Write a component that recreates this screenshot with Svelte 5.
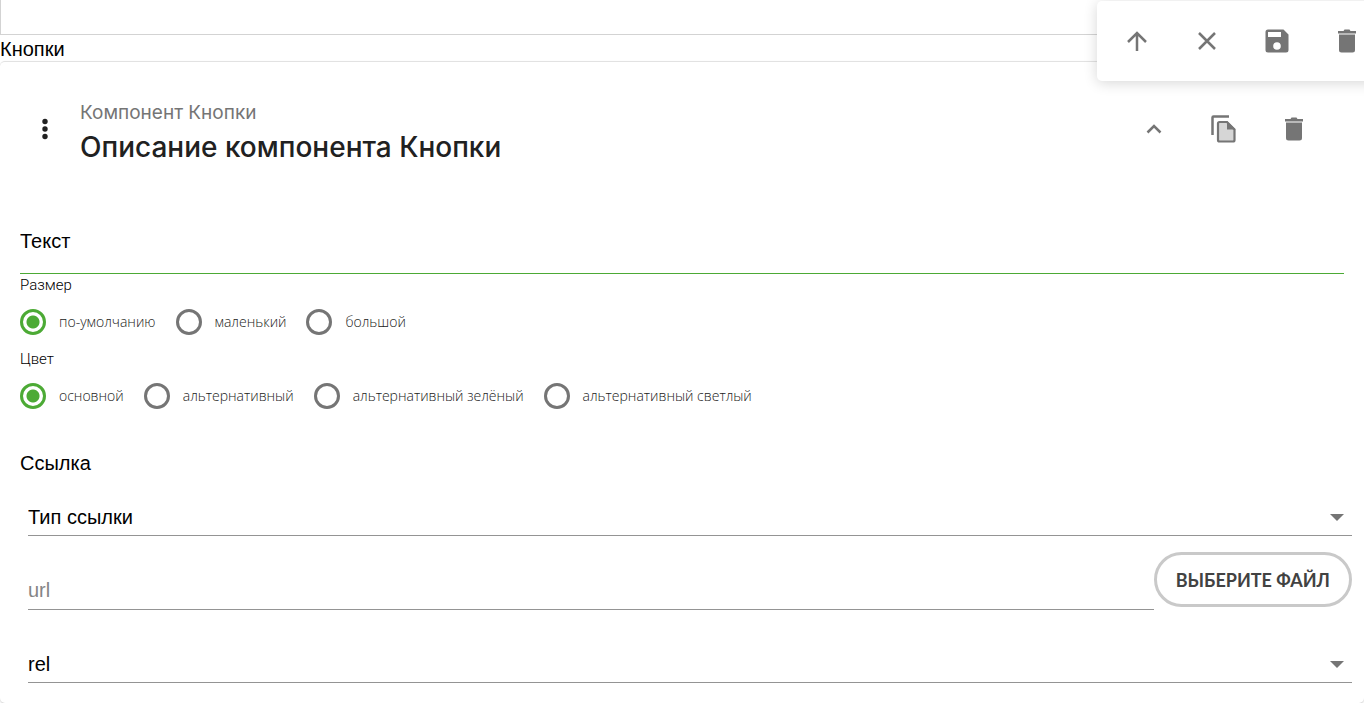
<script>
  const sizes = ['по-умолчанию', 'маленький', 'большой'];
  const colors = ['основной', 'альтернативный', 'альтернативный зелёный', 'альтернативный светлый'];

  let size = $state(sizes[0]);
  let color = $state(colors[0]);
  let text = $state('');
  let url = $state('');
  let collapsed = $state(false);
</script>

{#snippet trash()}
  <svg viewBox="0 0 26 26" width="26" height="26" aria-hidden="true">
    <path fill="currentColor" d="M5 6.500h16v15.500a2.500 2.500 0 0 1-2.500 2.500h-11A2.500 2.500 0 0 1 5 22z M4 3h5.500l1-1.500h5l1 1.500H22v2.500H4z" />
  </svg>
{/snippet}

{#snippet radios(name, options, value, pick)}
  <div class="options">
    {#each options as option}
      <label class="option">
        <input type="radio" {name} value={option} checked={option === value} onchange={() => pick(option)} />
        {option}
      </label>
    {/each}
  </div>
{/snippet}

<div class="page">
  <div class="previous"></div>
  <div class="section-name">Кнопки</div>

  <section class="card">
    <header class="card-header">
      <button class="icon-button" type="button" aria-label="Переместить">
        <svg viewBox="0 0 30 30" width="30" height="30" aria-hidden="true">
          <g fill="#212121">
            <circle cx="15" cy="7.500" r="2.700" />
            <circle cx="15" cy="15" r="2.700" />
            <circle cx="15" cy="22.500" r="2.700" />
          </g>
        </svg>
      </button>
      <div class="titles">
        <div class="subtitle">Компонент Кнопки</div>
        <h2>Описание компонента Кнопки</h2>
      </div>
      <div class="card-actions">
        <button class="icon-button" type="button" aria-label="Свернуть" onclick={() => (collapsed = !collapsed)}>
          <svg viewBox="0 0 30 30" width="30" height="30" aria-hidden="true">
            <path d="M8.500 18.500 15 12l6.500 6.500" fill="none" stroke="currentColor" stroke-width="2.500" />
          </svg>
        </button>
        <button class="icon-button" type="button" aria-label="Копировать">
          <svg viewBox="0 0 30 30" width="30" height="30" aria-hidden="true">
            <path d="M3.500 21V3.500q0-1 1-1H20" fill="none" stroke="currentColor" stroke-width="2.500" />
            <path d="M10.500 8H18l7.500 7.500V26q0 1.500-1.500 1.500H10.500Q9 27.500 9 26V9.500Q9 8 10.500 8z" fill="#d6d6d6" stroke="currentColor" stroke-width="2.200" />
            <path d="M18 7v8.500h8.500z" fill="currentColor" />
          </svg>
        </button>
        <button class="icon-button" type="button" aria-label="Удалить">{@render trash()}</button>
      </div>
    </header>

    {#if !collapsed}
      <div class="card-body">
        <input class="field text-field" type="text" placeholder="Текст" aria-label="Текст" bind:value={text} />

        <fieldset>
          <legend>Размер</legend>
          {@render radios('size', sizes, size, (v) => (size = v))}
        </fieldset>
        <fieldset>
          <legend>Цвет</legend>
          {@render radios('color', colors, color, (v) => (color = v))}
        </fieldset>

        <h3>Ссылка</h3>
        <div class="link">
          <div class="select-row">
            <select class="field" aria-label="Тип ссылки">
              <option>Тип ссылки</option>
            </select>
          </div>
          <div class="url-row">
            <input class="field" type="text" placeholder="url" aria-label="url" bind:value={url} />
            <button class="file-button" type="button">ВЫБЕРИТЕ ФАЙЛ</button>
          </div>
          <div class="select-row">
            <select class="field" aria-label="rel">
              <option>rel</option>
            </select>
          </div>
        </div>
      </div>
    {/if}
  </section>

  <div class="toolbar">
    <button class="icon-button" type="button" aria-label="Наверх">
      <svg viewBox="0 0 30 30" width="30" height="30" aria-hidden="true">
        <path d="M15 25V7M6 16l9-9 9 9" fill="none" stroke="currentColor" stroke-width="2.500" />
      </svg>
    </button>
    <button class="icon-button" type="button" aria-label="Закрыть">
      <svg viewBox="0 0 30 30" width="30" height="30" aria-hidden="true">
        <path d="M7 7l16 16M23 7L7 23" fill="none" stroke="currentColor" stroke-width="2.500" />
      </svg>
    </button>
    <button class="icon-button" type="button" aria-label="Сохранить">
      <svg viewBox="0 0 30 30" width="30" height="30" aria-hidden="true">
        <path
          fill="currentColor"
          fill-rule="evenodd"
          d="M6 3.500h15.500L26.500 8.500V24a2.500 2.500 0 0 1-2.500 2.500H6A2.500 2.500 0 0 1 3.500 24V6A2.500 2.500 0 0 1 6 3.500z M6 6v5h13V6z M15 16.200a3.800 3.800 0 1 0 0 7.600 3.800 3.800 0 0 0 0-7.600z"
        />
      </svg>
    </button>
    <button class="icon-button" type="button" aria-label="Удалить">{@render trash()}</button>
  </div>
</div>

<style>
  :global(body) {
    margin: 0;
    background: #fff;
  }

  .page {
    font-family: "Liberation Sans", Arial, sans-serif;
    font-size: 20px;
    line-height: 24px;
    color: #000;
  }

  .previous {
    height: 34px;
    border-left: 1px solid #d3d3d3;
    border-bottom: 1px solid #d3d3d3;
  }

  .section-name {
    padding-top: 2px;
  }

  .card {
    border-top: 1px solid #e2e2e2;
    border-radius: 5px;
    box-shadow: 0 1px 2px rgba(0, 0, 0, 0.2);
  }

  .card-header {
    display: flex;
    align-items: center;
    height: 134px;
    padding: 0 35px 0 10px;
  }

  .titles {
    flex: 1;
    padding-top: 6px;
    font-family: Inter, sans-serif;
  }

  .subtitle {
    font-size: 19px;
    color: #757575;
  }

  h2 {
    margin: 6px 0 0;
    font-size: 28px;
    line-height: 32px;
    font-weight: 500;
    color: #212121;
  }

  h3 {
    margin: 29px 0 0;
    font-size: 20px;
    font-weight: 400;
  }

  .icon-button {
    display: flex;
    align-items: center;
    justify-content: center;
    width: 70px;
    height: 70px;
    padding: 0;
    border: 0;
    background: none;
    color: #757575;
    cursor: pointer;
  }

  .card-actions {
    display: flex;
  }

  .card-body {
    padding: 20px;
  }

  .field {
    display: block;
    box-sizing: border-box;
    width: 100%;
    height: 38px;
    padding: 0;
    border: 0;
    border-bottom: 1px solid #949494;
    border-radius: 0;
    background: transparent;
    font: inherit;
    color: #000;
    outline: none;
  }

  .field::placeholder {
    color: #858585;
    opacity: 1;
  }

  .text-field {
    height: 58px;
    padding-bottom: 6px;
    border-color: #4caa35;
  }

  .text-field::placeholder {
    color: #000;
  }

  fieldset {
    margin: 0;
    padding: 0;
    border: 0;
  }

  legend {
    padding: 0;
    font-family: Roboto, sans-serif;
    font-size: 15px;
    line-height: 22px;
    font-weight: 300;
  }

  .options {
    display: flex;
    gap: 20px;
    height: 52px;
    align-items: center;
  }

  .option {
    display: flex;
    align-items: center;
    gap: 13px;
    font-family: "Open Sans", sans-serif;
    font-size: 14px;
    font-weight: 300;
    color: #212121;
  }

  .option input {
    appearance: none;
    width: 26px;
    height: 26px;
    margin: 0;
    border: 3px solid #757575;
    border-radius: 50%;
  }

  .option input:checked {
    border-color: #4caa35;
    background: radial-gradient(circle, #4caa35 6px, transparent 7px);
  }

  .link {
    padding-left: 8px;
    margin-right: -8px;
  }

  .select-row {
    display: grid;
    align-items: center;
    padding-top: 23px;
  }

  .select-row select {
    appearance: none;
  }

  .select-row::after {
    content: '';
    border: 7px solid transparent;
    border-top-color: #757575;
    border-bottom: 0;
    justify-self: end;
    margin-right: 8px;
    pointer-events: none;
  }

  .select-row > select,
  .select-row::after {
    grid-area: 1 / 1;
  }

  .url-row {
    display: flex;
    align-items: flex-end;
    padding: 16px 0 12px;
  }

  .url-row .field {
    flex: 1;
    min-width: 0;
  }

  .file-button {
    height: 55px;
    margin-bottom: 3px;
    padding: 0 19px;
    border: 3px solid #c9c9c9;
    border-radius: 28px;
    background: #fff;
    font-family: Lato, sans-serif;
    font-size: 18px;
    font-weight: 700;
    color: #424242;
    white-space: nowrap;
    cursor: pointer;
  }

  .toolbar {
    position: fixed;
    top: 1px;
    right: -18px;
    display: flex;
    align-items: center;
    height: 80px;
    padding-left: 5px;
    border-radius: 5px 0 0 5px;
    background: #fff;
    box-shadow: 0 2px 14px rgba(0, 0, 0, 0.16);
  }
</style>
